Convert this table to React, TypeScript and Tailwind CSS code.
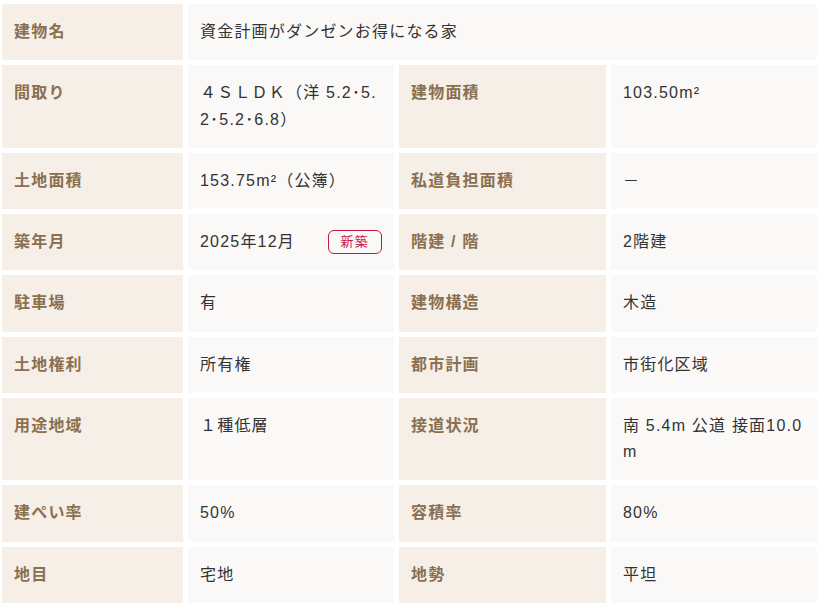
import React from "react";

type Cell = { label: string; value: React.ReactNode };

const rows: (Cell[])[] = [
  [{ label: "間取り", value: "４ＳＬＤＫ（洋 5.2･5.2･5.2･6.8）" }, { label: "建物面積", value: "103.50m²" }],
  [{ label: "土地面積", value: "153.75m²（公簿）" }, { label: "私道負担面積", value: "－" }],
  [
    {
      label: "築年月",
      value: (
        <div className="flex items-center justify-between">
          <span>2025年12月</span>
          <span className="inline-flex h-[24px] items-center rounded-[6px] border border-[#c8164a] px-[12px] text-[13px] leading-[20px] text-[#c8164a]">
            新築
          </span>
        </div>
      ),
    },
    { label: "階建 / 階", value: "2階建" },
  ],
  [{ label: "駐車場", value: "有" }, { label: "建物構造", value: "木造" }],
  [{ label: "土地権利", value: "所有権" }, { label: "都市計画", value: "市街化区域" }],
  [{ label: "用途地域", value: "１種低層" }, { label: "接道状況", value: "南 5.4m 公道 接面10.0m" }],
  [{ label: "建ぺい率", value: "50%" }, { label: "容積率", value: "80%" }],
  [{ label: "地目", value: "宅地" }, { label: "地勢", value: "平坦" }],
];

const labelCls =
  "bg-[#f5efe8] px-[12px] py-[15px] font-bold text-[#8a6f50] leading-[26.25px]";
const valueCls =
  "bg-[#faf9f7] px-[12px] py-[15px] text-[#333333] leading-[26.25px] break-all";

export default function App() {
  return (
    <div
      className="min-h-[603px] w-[822px] bg-white pl-[2px] pt-[4px] text-[16px] tracking-[0.075em]"
      style={{ fontFamily: '"Liberation Sans", "Noto Sans CJK JP", sans-serif' }}
    >
      <div className="grid grid-cols-[181px_206px_207px_206px] gap-[5px]">
        <div className={labelCls}>建物名</div>
        <div className={`${valueCls} col-span-3`}>資金計画がダンゼンお得になる家</div>
        {rows.map((r, i) => (
          <React.Fragment key={i}>
            <div className={labelCls}>{r[0].label}</div>
            <div className={valueCls}>{r[0].value}</div>
            <div className={labelCls}>{r[1].label}</div>
            <div className={valueCls}>{r[1].value}</div>
          </React.Fragment>
        ))}
      </div>
    </div>
  );
}
